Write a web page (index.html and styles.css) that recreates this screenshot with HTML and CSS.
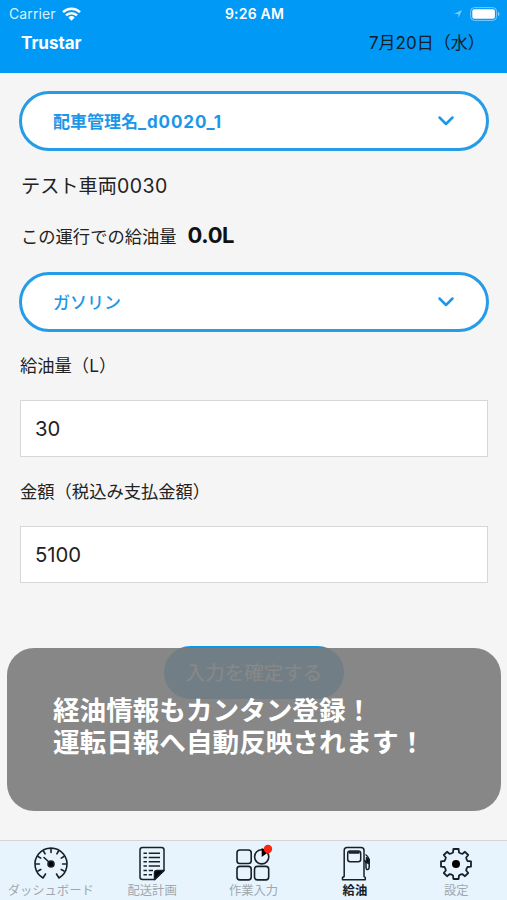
FILE: index.html
```html
<!DOCTYPE html>
<html lang="ja">
<head>
<meta charset="utf-8">
<title>Trustar</title>
<link rel="stylesheet" href="styles.css">
</head>
<body>
<div class="app">
  <header class="header">
    <div class="status">
      <div class="carrier"><span>Carrier</span>
        <svg width="19" height="14" viewBox="0 0 19 14" fill="none" stroke="#fff" stroke-width="2.5"><path d="M1 5.2a12.2 12.2 0 0 1 17 0M4 8.4a8 8 0 0 1 11 0"/><path d="M6.3 10.6a4.7 4.7 0 0 1 6.4 0L9.5 13.8z" fill="#fff" stroke="none"/></svg>
      </div>
      <div class="time">9:26 AM</div>
      <div class="power">
        <svg width="8" height="8" viewBox="0 0 8 8"><path d="M0 4 8 0 4.4 8V4z" fill="#7fccff"/></svg>
        <svg width="30" height="14" viewBox="0 0 30 14"><rect x=".6" y=".6" width="26" height="12.8" rx="3.8" fill="none" stroke="#7fc9fa"/><rect x="2.3" y="2.3" width="22.6" height="9.4" rx="2" fill="#fff"/><path d="M28 4.8c2 .7 2 3.7 0 4.4z" fill="#7fc9fa"/></svg>
      </div>
    </div>
    <div class="title-row"><h1 class="title">Trustar</h1><span class="date">7月20日（水<span class="close">）</span></span></div>
  </header>
  <main class="main">
    <div class="select"><span>配車管理名<span class="code">_d0020_1</span></span>
      <svg width="18" height="12" viewBox="0 0 18 12"><path d="m2.5 2.5 6.5 6.5 6.5-6.5"/></svg></div>
    <p class="vehicle">テスト車両<span class="number">0030</span></p>
    <p class="total"><span>この運行での給油量</span><strong>0.0L</strong></p>
    <div class="select select-fuel"><span>ガソリン</span>
      <svg width="18" height="12" viewBox="0 0 18 12"><path d="m2.5 2.5 6.5 6.5 6.5-6.5"/></svg></div>
    <label class="label" for="amount">給油量（L<span class="close">）</span></label>
    <input class="field" id="amount" value="30">
    <label class="label label-price" for="price">金額（税込み支払金額<span class="close">）</span></label>
    <input class="field" id="price" value="5100">
    <button class="confirm">入力を確定する</button>
  </main>
  <div class="caption"><p>経油情報もカンタン登録！</p><p>運転日報へ自動反映されます！</p></div>
  <nav class="tabs">
    <div class="tab">
      <svg width="36" height="36" viewBox="-18 -18 36 36" fill="none" stroke="#182027" stroke-width="1.6" stroke-linecap="round" stroke-linejoin="round"><path d="M-5.5 10-8 14A16 16 0 1 1 8 14L5.5 10"/><path d="M0-15v3.4M-7.5-13l1.6 2.8M7.5-13l-1.6 2.8M-13-7.5l2.8 1.6M13-7.5l-2.8 1.6M-15 0h3.4M15 0h-3.4M-13 7l2.8-1.5M13 7l-2.8-1.5M-7-6.5l6 5.5"/><circle r="3" fill="#000"/></svg>
      <span>ダッシュボード</span>
    </div>
    <div class="tab">
      <svg width="36" height="36" viewBox="-18 -18 36 36" fill="none" stroke="#182027" stroke-width="1.5" stroke-linejoin="round"><path d="M-9.5-16.5H9.5Q12-16.5 12-14V6.5L2.8 15.5H-9.5Q-12 15.5-12 13V-14Q-12-16.5-9.5-16.5Z"/><path d="M2.5 15.5V9Q2.5 6.5 5 6.5H12Z" fill="#000"/><path d="M-8.5-10.8h3.4m1.8 0H8M-8.5-6.5h3.4m1.8 0H8M-8.5-2.2h3.4m1.8 0H8M-8.5 2.1h3.4m1.8 0H8M-8.5 6.4h3.4m1.8 0H1M-8.5 10.7h3.4m1.8 0H0"/></svg>
      <span>配送計画</span>
    </div>
    <div class="tab">
      <svg width="36" height="36" viewBox="-18 -18 36 36" fill="none" stroke="#182027" stroke-width="1.6"><rect x="-16" y="-14" width="14.2" height="13.5" rx="2.8"/><rect x="-16" y="2.4" width="14.2" height="13.5" rx="2.8"/><rect x="1.5" y="2.4" width="14.2" height="13.5" rx="2.8"/><circle cx="8.7" cy="-7.2" r="7.1"/><path d="M8.7-7V-16Q13-15 15-11.5Z" fill="#000" stroke="none"/><circle cx="15" cy="-15" r="4.2" fill="#ff2412" stroke="none"/></svg>
      <span>作業入力</span>
    </div>
    <div class="tab active">
      <svg width="36" height="36" viewBox="-18 -18 36 36" fill="none" stroke="#182027" stroke-width="1.5" stroke-linejoin="round"><path d="M-10.8 12.5V-13.5Q-10.8-16.5-8-16.5H6Q9-16.5 9-13.5V12.5L10.3 13.5V15.8H-12.5V13.5Z"/><rect x="-7.3" y="-13" width="13" height="10.8" rx="2.5"/><path d="M-6-11.5H4.5" stroke-width="2.5"/><path d="M9-3.5Q11-3.5 11 0V3.5Q11.2 6 12.8 5.5T14.2 2V-4.5Q13.5-7.5 10.5-9.5"/><path d="M11.5-6.5v5l2.5 1V-4.5z" fill="#000"/></svg>
      <span>給油</span>
    </div>
    <div class="tab">
      <svg width="36" height="36" viewBox="-18 -18 36 36" fill="none" stroke="#182027" stroke-width="1.8" stroke-linejoin="round"><path d="M-3-11.5-2.6-15H2.6L3-11.5Q5.4-10 6.5-10.2L9-12.2 12.2-9 10.2-6.5Q10-5.4 11.5-3L15-2.6V2.6L11.5 3Q10 5.4 10.2 6.5L12.2 9 9 12.2 6.5 10.2Q5.4 10 3 11.5L2.6 15H-2.6L-3 11.5Q-5.4 10-6.5 10.2L-9 12.2-12.2 9-10.2 6.5Q-10 5.4-11.5 3L-15 2.6V-2.6L-11.5-3Q-10-5.4-10.2-6.5L-12.2-9-9-12.2-6.5-10.2Q-5.4-10-3-11.5Z"/><circle r="4" fill="#000" stroke="none"/></svg>
      <span>設定</span>
    </div>
  </nav>
</div>
</body>
</html>
```
FILE: styles.css
```css
* { box-sizing: border-box; }
body { margin: 0; font-family: Inter, "Noto Sans CJK JP", sans-serif; color: #222; }
p, h1 { margin: 0; }
.app { position: relative; display: flex; flex-direction: column; width: 507px; height: 900px; background: #f5f5f5; overflow: hidden; }
.header { height: 73px; background: #0099f5; color: #fff; }
.status { display: grid; grid-template-columns: 1fr 1fr 1fr; align-items: center; height: 27px; padding: 0 7px 0 9px; font-size: 14px; line-height: 20px; }
.carrier { display: flex; align-items: center; gap: 6px; color: #d9f1ff; letter-spacing: .1px; }
.time { text-align: center; font-weight: 600; letter-spacing: .2px; }
.power { display: flex; align-items: center; justify-content: flex-end; gap: 8px; }
.title-row { display: flex; align-items: center; justify-content: space-between; height: 32px; padding: 0 22px 0 21px; }
.title { font-size: 17px; line-height: 24px; font-weight: 700; }
.date { width: 116px; color: #10202b; font-size: 17px; line-height: 24px; white-space: nowrap; }
.close { display: inline-block; margin-left: 0; }
.main { display: flex; flex-direction: column; flex: 1; padding: 18px 18px 0 19px; }
.select { display: flex; align-items: center; justify-content: space-between; height: 60px; padding: 0 31px 2px; border: 3px solid #269be6; border-radius: 30px; background: #fff; color: #1c97e7; font-size: 17px; font-weight: 700; }
.select-fuel { font-weight: 500; }
.select svg { position: relative; top: 1px; fill: none; stroke: #1c97e7; stroke-width: 2.5; stroke-linecap: round; stroke-linejoin: round; }
.code { letter-spacing: .9px; }
.vehicle { height: 30px; margin: 20px 2px 0; font-size: 19.2px; line-height: 31px; }
.number { font-size: 19.5px; letter-spacing: .5px; }
.total { display: flex; align-items: center; gap: 11px; height: 30px; margin: 19px 2px 22px; font-size: 17.3px; }
.total strong { color: #111; font-size: 22px; font-weight: 700; letter-spacing: -.4px; }
.label { height: 24px; margin: 22px 1px; font-size: 17.3px; line-height: 24px; }
.label-price { margin-top: 23px; }
.field { width: 468px; height: 57px; margin: 0 1px; padding: 0 14px; border: 1px solid #d7d7d7; border-radius: 0; background: #fff; color: #222; font: 20.3px Inter, sans-serif; }
.confirm { align-self: center; width: 180px; height: 53px; margin-top: 63px; padding-bottom: 3px; border: 0; border-radius: 27px; background: #0c98e8; color: #fff; font: 19.5px "Noto Sans CJK JP", sans-serif; white-space: nowrap; }
.caption { position: absolute; left: 7px; top: 648px; width: 494px; height: 163px; padding: 45px 46px 0; border-radius: 27px; background: rgba(124, 124, 124, .906); color: #fff; font: 700 26.6px/32px "Noto Sans CJK JP", sans-serif; }
.tabs { display: grid; grid-template-columns: repeat(5, 1fr); height: 60px; border-top: 1px solid #cfd5d9; background: #e7f4fd; }
.tab { display: flex; flex-direction: column; align-items: center; padding-top: 5px; color: #a0a8ad; font-size: 12.3px; line-height: 18px; }
.tab svg { overflow: visible; }
.tab.active { color: #182027; font-weight: 700; }
```
